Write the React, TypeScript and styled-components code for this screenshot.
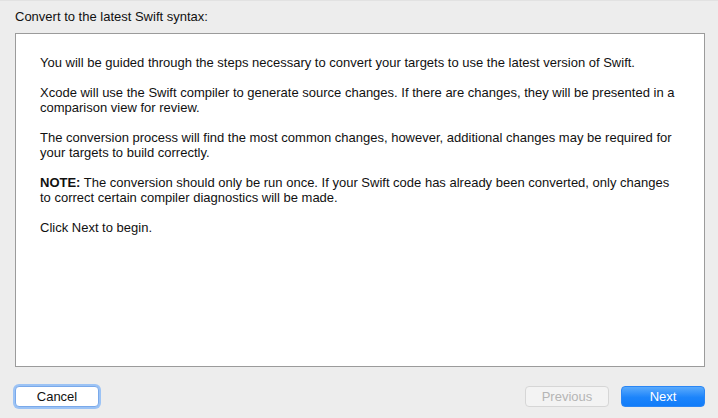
import * as React from 'react'
import styled, { createGlobalStyle } from 'styled-components'

const GlobalStyle = createGlobalStyle`
html, body {
  margin: 0;
  padding: 0;
  background: #ededed;
}
body {
  font-family: 'Liberation Sans', Arial, Helvetica, sans-serif;
  font-size: 13px;
  color: #1a1a1a;
}
`

const Sheet = styled.div`
width: 718px;
height: 418px;
display: flex;
flex-direction: column;
background: #ededed;
border-top: 1px solid #e2e2e2;
box-sizing: border-box;
`

const Title = styled.div`
height: 32px;
padding: 8px 15px 0;
box-sizing: border-box;
line-height: 16px;
color: #111;
`

const Panel = styled.div`
margin: 0 13px 0 15px;
height: 334px;
box-sizing: border-box;
background: #fff;
border: 1px solid #9b9b9b;
padding: 21px 25px 0 24px;
`

const Paragraph = styled.p`
margin: 0 0 15px;
line-height: 15px;
color: #111;
`

const Footer = styled.div`
flex: 1;
display: flex;
align-items: flex-start;
padding: 19px 13px 0 15px;
gap: 12px;
`

const Spacer = styled.div`
flex: 1;
`

const Button = styled.button<{ $variant?: 'default' | 'primary' | 'disabled' }>`
width: 84px;
height: 21px;
box-sizing: border-box;
border-radius: 4px;
font-family: 'Liberation Sans', Arial, Helvetica, sans-serif;
font-size: 13px;
line-height: 18px;
padding: 0;
cursor: default;
border: 1px solid ${p => p.$variant === 'primary' ? '#2a86f5' : p.$variant === 'disabled' ? '#d6d6d6' : '#7aa9ea'};
background: ${p => p.$variant === 'primary'
  ? 'linear-gradient(#5aaafc, #1c84fb 55%, #117cf9)'
  : p.$variant === 'disabled' ? '#f3f3f3' : '#fff'};
color: ${p => p.$variant === 'primary' ? '#fff' : p.$variant === 'disabled' ? '#b5b5b5' : '#111'};
box-shadow: ${p => p.$variant === 'default' ? '0 0 0 2px #9cc3f5' : 'none'};
`

export default function App() {
  return (
    <>
      <GlobalStyle />
      <Sheet>
        <Title>Convert to the latest Swift syntax:</Title>
        <Panel>
          <Paragraph>You will be guided through the steps necessary to convert your targets to use the latest version of Swift.</Paragraph>
          <Paragraph>Xcode will use the Swift compiler to generate source changes. If there are changes, they will be presented in a comparison view for review.</Paragraph>
          <Paragraph>The conversion process will find the most common changes, however, additional changes may be required for your targets to build correctly.</Paragraph>
          <Paragraph><b>NOTE:</b> The conversion should only be run once. If your Swift code has already been converted, only changes to correct certain compiler diagnostics will be made.</Paragraph>
          <Paragraph>Click Next to begin.</Paragraph>
        </Panel>
        <Footer>
          <Button $variant='default'>Cancel</Button>
          <Spacer />
          <Button $variant='disabled'>Previous</Button>
          <Button $variant='primary'>Next</Button>
        </Footer>
      </Sheet>
    </>
  )
}
